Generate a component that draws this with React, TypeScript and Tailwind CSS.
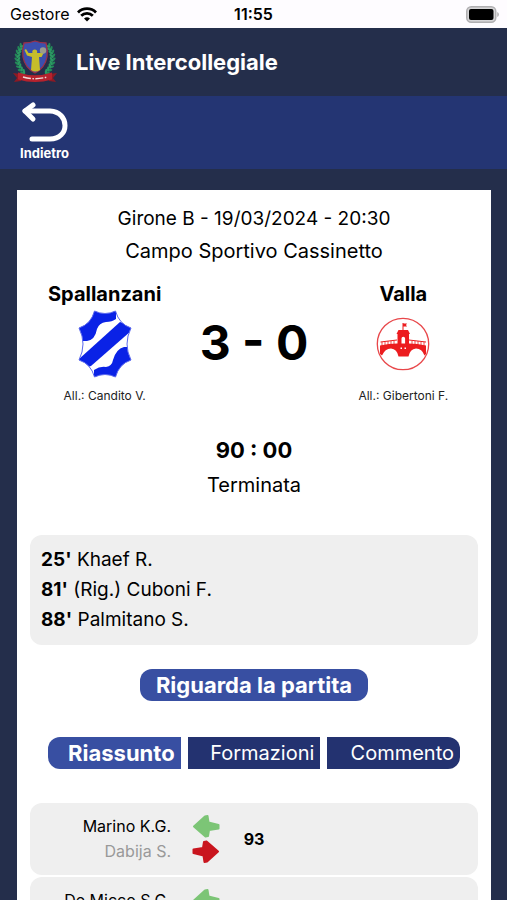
import React, { useState } from "react";
import clsx from "clsx";

type Substitution = {
  id: number;
  playerIn: string;
  playerOut: string;
  minute: number;
};

const scorers = [
  { minute: 25, name: "Khaef R." },
  { minute: 81, name: "(Rig.) Cuboni F." },
  { minute: 88, name: "Palmitano S." },
];

const substitutions: Substitution[] = [
  { id: 1, playerIn: "Marino K.G.", playerOut: "Dabija S.", minute: 93 },
  { id: 2, playerIn: "De Micco S.G.", playerOut: "Khaef R.", minute: 90 },
];

const tabs = ["Riassunto", "Formazioni", "Commento"];

const StatusBar = () => (
  <div className="relative flex h-7 shrink-0 items-center justify-between bg-[#fefcff] pr-2 pl-[10px] text-black">
    <div className="flex items-center gap-2">
      <span className="text-base">Gestore</span>
      <svg width="20" height="15" viewBox="0 0 20 15" fill="none" stroke="currentColor" strokeWidth="2.8">
        <path d="M1 5.4a12.8 12.8 0 0 1 18 0" />
        <path d="M4.2 8.8a8.2 8.2 0 0 1 11.6 0" />
        <path d="M10 14.6l-3-3a4.3 4.3 0 0 1 6 0z" fill="currentColor" stroke="none" />
      </svg>
    </div>
    <span className="absolute inset-x-0 text-center text-base font-semibold">11:55</span>
    <svg width="33" height="17" viewBox="0 0 33 17">
      <rect x="0.75" y="0.75" width="29" height="15.5" rx="4.5" fill="#d6d5d7" stroke="#b0afb1" strokeWidth="1.5" />
      <rect x="3" y="3" width="24.5" height="11" rx="2" fill="#000" />
      <path d="M31.3 6v5c2-.8 2-4.2 0-5z" fill="#a9a8aa" />
    </svg>
  </div>
);

// laurel leaves run from the ribbon up to the top corner of the shield
const leafAngles = [128, 139, 150, 161, 172, 183, 194, 205, 216];

const LeagueLogo = () => (
  <svg width="46" height="48" viewBox="0 0 46 48">
    {[1, -1].map((side) => (
      <g key={side} transform={side === 1 ? undefined : "translate(46 0) scale(-1 1)"}>
        {leafAngles.map((angle) => {
          const rad = (angle * Math.PI) / 180;
          const x = 23 + Math.cos(rad) * 17.5;
          const y = 20 + Math.sin(rad) * 19;
          return (
            <g key={angle} transform={`translate(${x} ${y}) rotate(${angle - 180})`}>
              <ellipse cx="-1.6" rx="2.6" ry="1.2" transform="rotate(50)" fill="#238a58" />
              <ellipse cx="1.6" rx="2.6" ry="1.2" transform="rotate(-50)" fill="#2c9a63" />
            </g>
          );
        })}
      </g>
    ))}
    <path
      d="M12 5Q18 5 23 3Q28 5 34 5Q36 12 35 19Q33 30 23 35Q13 30 11 19Q10 12 12 5Z"
      fill="#3b4fae"
      stroke="#9c3048"
      strokeWidth="1.3"
    />
    <path
      d="M14 11l2.500 4h4a2.500 2.500 0 1 1 4.500 0h4l2-2.500 1.500 1-3 5.500h-2.500L28 32q-5 3-9 0l1-13-5-1.500-2.500-5.500z"
      fill="#c6bd2b"
    />
    <circle cx="31" cy="12.5" r="3.2" fill="#9b9c8c" />
    <path d="M1 35l8 1v7l-7 1 3-4z M45 35l-8 1v7l7 1-3-4z" fill="#8c1a24" />
    <path d="M6 34.5Q23 40 40 34.500V41.500Q23 46.500 6 41.500Z" fill="#b5222d" />
    <path d="M11 39Q23 42.500 35 39" fill="none" stroke="#f1d9d9" strokeWidth="1.4" strokeDasharray="8 1.5 1.500 1.500" />
  </svg>
);

const crestOutline =
  "M16.500 1Q27 6 37.500 1Q41 14 53 18Q45 34 53 50Q41 54 37.500 67Q27 62 16.500 67Q13 54 1 50Q9 34 1 18Q13 14 16.500 1Z";

const HomeCrest = () => (
  <svg width="54" height="68" viewBox="0 0 54 68">
    <defs>
      <clipPath id="home-crest">
        <path d={crestOutline} />
      </clipPath>
    </defs>
    <g clipPath="url(#home-crest)" fill="#0a22e6">
      <path d="M0 50L42 12L54 16V20L13 56L0 60Z" />
      <path d="M0 0H38V9Q34 12 28 12Q21 13 19 19Q17 30 9 31H0Z" />
      <path d="M54 68H16V60Q22 56 28 57Q34 56 35 50Q38 39 46 37H54Z" />
    </g>
    <path d={crestOutline} fill="none" stroke="#5a68ee" strokeWidth="1" />
  </svg>
);

const AwayCrest = () => (
  <svg width="54" height="54" viewBox="0 0 54 54">
    <circle cx="27" cy="27" r="25.7" fill="none" stroke="#e8474a" strokeWidth="1.3" />
    <g fill="#ec1c1f">
      <path d="M26.500 6h1v8h-1z M27.500 6.500h3.500l-1 1.500 1 1.500h-3.500z" />
      <path d="M20.500 17l2-4h9.500l2 4z M21.500 17h11.500v12H21.500z" />
      <path d="M4.500 24.500L21 22.500v1L4.500 25.500z M50 24.500L33 22.500v1L50 25.500z" />
      <path d="M4 28.500Q13 26.500 21 26.500h12Q41 26.500 50 28.500V37L48.500 38.500Q46 31.500 40 31.500Q34 32 32.500 39.500h-10Q21 32 15 31.500Q9 31.500 6 38.500L4 37Z" />
      <path
        d="M6 25v4M9 25v4M12 24v4M15 24v4M18 24v4M36 24v4M39 24v4M42 24v4M45 25v4M48 25v4"
        stroke="#ec1c1f"
        strokeWidth="0.8"
      />
    </g>
    <path d="M25.500 26.500v-5a1.800 1.800 0 0 1 3.600 0v5z M24.500 30.500h1.500v1.500h-1.500z M28.500 30.500H30v1.500h-1.500z" fill="#fff" />
  </svg>
);

const SwapArrow = ({ out }: { out?: boolean }) => (
  <svg
    width="28"
    height="24"
    viewBox="0 0 28 24"
    className={clsx(out && "rotate-180")}
    fill={out ? "#c9151e" : "#7cc576"}
    stroke={out ? "#c9151e" : "#7cc576"}
    strokeWidth="2"
    strokeLinejoin="round"
  >
    <path d="M2 12.500L13 2.500L15.500 2L16.500 8.500L26.500 11V14.500L17 16L16 22L13.500 22.500Z" />
  </svg>
);

const Team = ({
  name,
  coach,
  children,
}: {
  name: string;
  coach: string;
  children: React.ReactNode;
}) => (
  <div className="flex flex-col items-center">
    <h2 className="text-xl leading-6 font-bold">{name}</h2>
    <div className="flex h-[76px] items-center">{children}</div>
    <p className="mt-[2px] text-xs leading-6 text-[#222]">All.: {coach}</p>
  </div>
);

const SubstitutionRow = ({ playerIn, playerOut, minute }: Substitution) => (
  <li className="grid grid-cols-[1fr_68px_1fr] items-center rounded-xl bg-[#efefef] py-[11px]">
    <div className="flex items-center justify-end gap-[21px]">
      <div className="text-right text-base leading-[25px]">
        <p>{playerIn}</p>
        <p className="text-[#999]">{playerOut}</p>
      </div>
      <div className="flex flex-col gap-[2px]">
        <SwapArrow />
        <SwapArrow out />
      </div>
    </div>
    <span className="text-center text-base font-bold">{minute}</span>
  </li>
);

const App = () => {
  const [activeTab, setActiveTab] = useState<string>("Riassunto");

  return (
    <div className="flex h-screen flex-col overflow-hidden bg-[#242e4b] font-['Inter','Liberation_Sans',sans-serif] text-black">
      <StatusBar />
      <header className="shrink-0">
        <div className="flex h-[68px] items-center gap-[18px] px-3">
          <LeagueLogo />
          <h1 className="text-[22px] font-bold text-white">Live Intercollegiale</h1>
        </div>
        <nav className="h-[73px] bg-[#243573] px-5 pt-[5px]">
          <a href="#" className="inline-flex flex-col items-center text-white">
            <svg width="48" height="44" viewBox="0 0 48 44" fill="none" stroke="currentColor" strokeWidth="5" strokeLinecap="round" strokeLinejoin="round">
              <path d="M5 10H30C50 11 50 38 30 38H12" />
              <path d="M13 4L5 10L13 18" />
            </svg>
            <span className="text-[13px] leading-4 font-bold">Indietro</span>
          </a>
        </nav>
      </header>

      <main className="min-h-0 flex-1 overflow-y-auto pt-[21px] pr-4 pl-[17px] [scrollbar-width:none]">
        <div className="bg-white px-[13px] pt-3 pb-8">
          <div className="text-center leading-[33px]">
            <p className="text-[19px]">Girone B - 19/03/2024 - 20:30</p>
            <p className="text-[20px]">Campo Sportivo Cassinetto</p>
          </div>

          <section className="mt-[14px] grid grid-cols-3">
            <Team name="Spallanzani" coach="Candito V.">
              <HomeCrest />
            </Team>
            <p className="mt-[37px] text-center text-[48px] leading-[48px] font-bold">3 - 0</p>
            <Team name="Valla" coach="Gibertoni F.">
              <AwayCrest />
            </Team>
          </section>

          <div className="mt-[25px] text-center leading-[35px]">
            <p className="text-[22px] font-bold">90 : 00</p>
            <p className="text-[20px]">Terminata</p>
          </div>

          <ul className="mt-8 rounded-xl bg-[#efefef] px-[11px] py-[10px] text-[19px] leading-[30px]">
            {scorers.map((s) => (
              <li key={s.minute}>
                <b>{s.minute}'</b> {s.name}
              </li>
            ))}
          </ul>

          <div className="mt-6 flex justify-center">
            <button className="h-8 rounded-xl bg-[#384fa2] px-4 text-[22px] leading-8 font-bold text-white">
              Riguarda la partita
            </button>
          </div>

          <div className="mx-[18px] mt-9 grid grid-cols-3 gap-[7px]">
            {tabs.map((tab) => (
              <button
                key={tab}
                onClick={() => setActiveTab(tab)}
                className={clsx(
                  "h-8 pr-[6px] text-right leading-8 text-white first:rounded-l-xl last:rounded-r-xl",
                  activeTab === tab ? "bg-[#384fa2] text-[22px] font-bold" : "bg-[#233270] text-[20px]"
                )}
              >
                {tab}
              </button>
            ))}
          </div>

          <ul className="mt-[34px] flex flex-col gap-[2px]">
            {substitutions.map((sub) => (
              <SubstitutionRow key={sub.id} {...sub} />
            ))}
          </ul>
        </div>
      </main>
    </div>
  );
};

export default App;
